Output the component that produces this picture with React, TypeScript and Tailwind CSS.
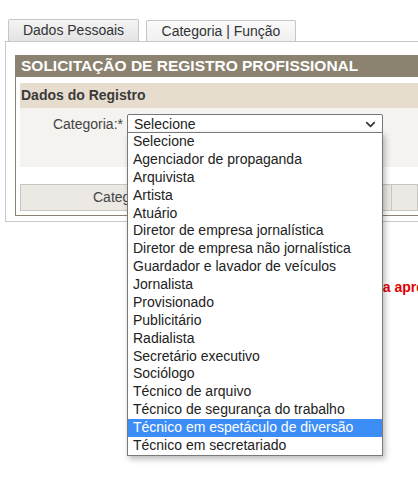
import { ChevronDown } from 'lucide-react';

const categorias = [
  'Selecione',
  'Agenciador de propaganda',
  'Arquivista',
  'Artista',
  'Atuário',
  'Diretor de empresa jornalística',
  'Diretor de empresa não jornalística',
  'Guardador e lavador de veículos',
  'Jornalista',
  'Provisionado',
  'Publicitário',
  'Radialista',
  'Secretário executivo',
  'Sociólogo',
  'Técnico de arquivo',
  'Técnico de segurança do trabalho',
  'Técnico em espetáculo de diversão',
  'Técnico em secretariado',
];

const selected = 'Técnico em espetáculo de diversão';

function App() {
  return (
    <div className="w-[418px] h-[480px] overflow-hidden bg-white text-[14px] text-[#333] font-['Liberation_Sans',Arial,sans-serif]">
      {/* Tabs */}
      <div className="flex items-end gap-[7px] pl-[8px] pt-[19px]">
        <div className="w-[131px] h-[22px] flex items-center justify-center border border-b-0 border-[#c6c6c6] rounded-t-[2px] bg-gradient-to-b from-[#f4f4f4] to-[#e3e3e3]">
          Dados Pessoais
        </div>
        <div className="w-[150px] h-[21px] flex items-center justify-center border border-b-0 border-[#c6c6c6] rounded-t-[2px] bg-gradient-to-b from-[#fafafa] to-[#f0f0f0]">
          Categoria | Função
        </div>
      </div>

      {/* Panel */}
      <div className="ml-[5px] border-l border-t border-b border-[#c8c8c8] pl-[9px] pt-[13px] pb-[5px]">
        <div className="border-l border-b border-[#8a8270] pb-[4px]">
          <div className="h-[22px] -ml-px bg-[#8b8270] flex items-center pl-[6px] text-white font-bold text-[15.5px] whitespace-nowrap">
            SOLICITAÇÃO DE REGISTRO PROFISSIONAL
          </div>
          <div className="pl-[4px]">
            <div className="mt-[6px] h-[25px] bg-[#e7ddcf] flex items-center pl-px font-bold text-[#3a3a3a] whitespace-nowrap">
              Dados do Registro
            </div>
            <div className="h-[59px] bg-[#f5f3ef] pt-[6px] flex items-start">
              <div className="w-[103px] text-right leading-[20px] text-[#444]">Categoria:*</div>
              <div className="relative ml-[4px]">
                <div className="w-[256px] h-[20px] border border-[#767676] rounded-[2px] bg-white flex items-center justify-between pl-[6px] pr-[4px] text-[#222]">
                  <span>Selecione</span>
                  <ChevronDown size={15} strokeWidth={2.6} className="text-[#333]" />
                </div>
                {/* open list */}
                <div className="absolute left-0 top-[18px] w-[256px] z-10 bg-white border border-[#7a7a7a] shadow-[2px_3px_6px_rgba(0,0,0,0.28)]">
                  {categorias.map((c) => (
                    <div
                      key={c}
                      className={
                        c === selected
                          ? 'h-[17.875px] leading-[17.875px] pl-[5px] whitespace-nowrap bg-[#3d8df6] text-white'
                          : 'h-[17.875px] leading-[17.875px] pl-[5px] whitespace-nowrap text-[#222]'
                      }
                    >
                      {c}
                    </div>
                  ))}
                </div>
              </div>
            </div>
            <div className="mt-[17px] h-[27px] flex border border-[#c9c5c0] bg-[#ece9e5]">
              <div className="w-[371px] border-r border-[#c9c5c0] flex items-center pl-[72px] text-[#444] whitespace-nowrap">
                Categoria Profissional
              </div>
              <div className="flex-1" />
            </div>
          </div>
        </div>
      </div>

      <p className="mt-[55px] pl-[193px] whitespace-nowrap font-bold text-[#e00000]">
        Selecione uma categoria para apresentar os documentos
      </p>
    </div>
  );
}

export default App;
